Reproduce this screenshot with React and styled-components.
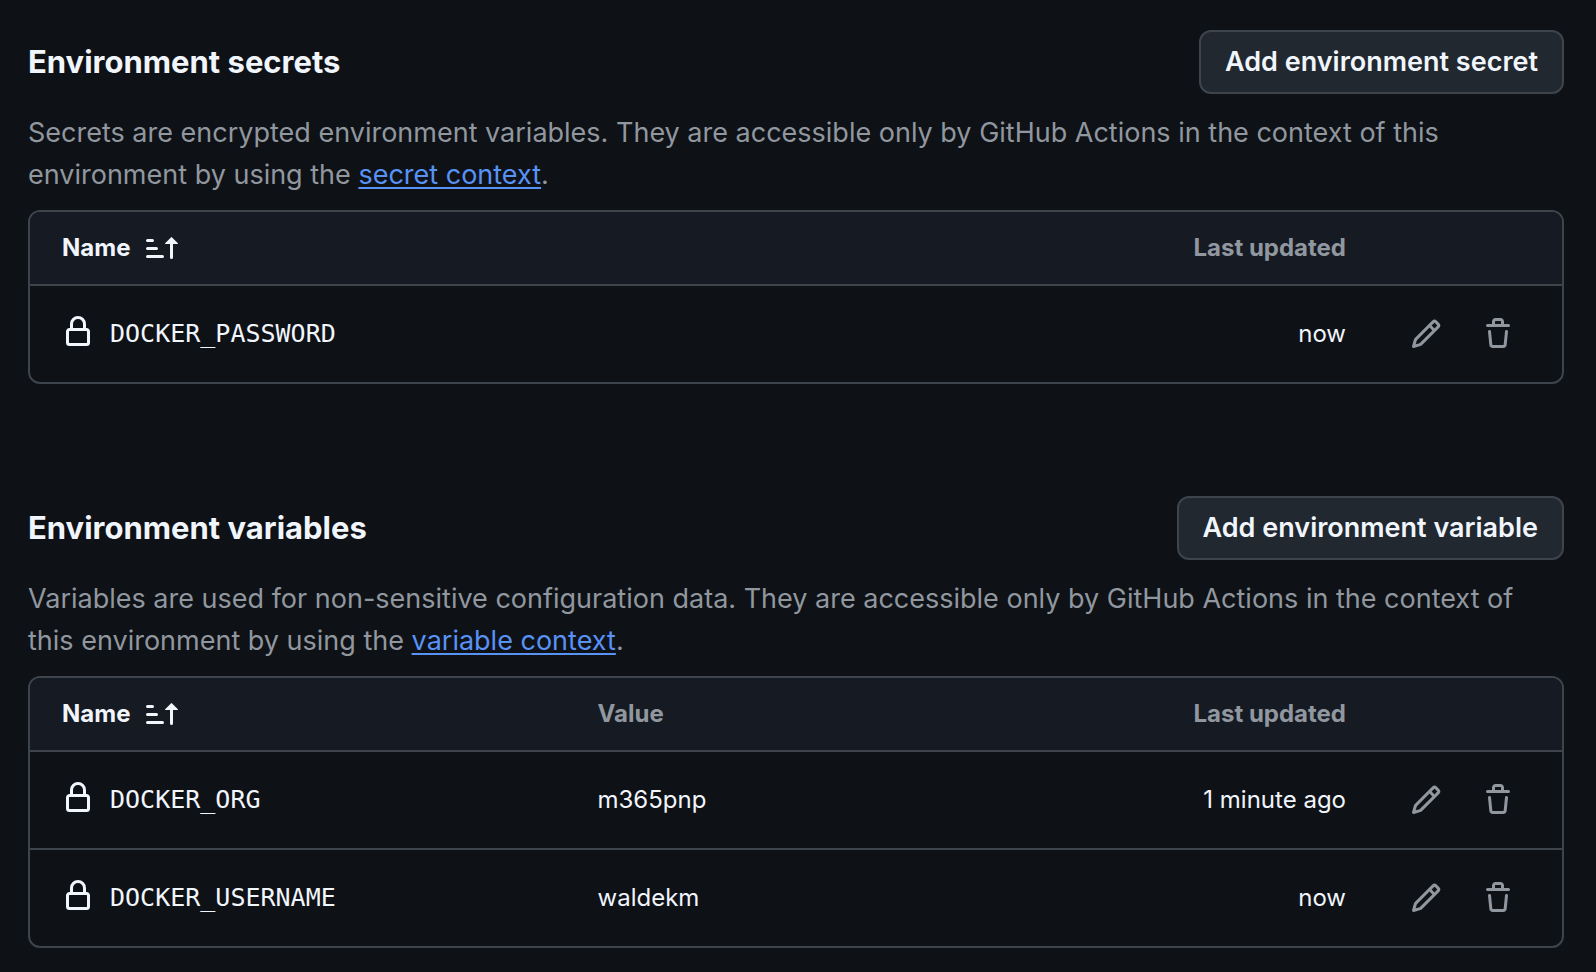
import React from 'react';
import styled, { createGlobalStyle, ThemeProvider } from 'styled-components';

const theme = {
  canvas: '#0e1116',
  header: '#161a23',
  control: '#222830',
  border: '#3e444c',
  text: '#f1f5fc',
  muted: '#91979f',
  link: '#5892f5',
  sans: 'Inter, "Liberation Sans", sans-serif',
  mono: '"DejaVu Sans Mono", "Liberation Mono", monospace',
};

const GlobalStyle = createGlobalStyle`
  *, *::before, *::after { box-sizing: border-box; }
  body {
    margin: 0;
    background: ${theme.canvas};
    color: ${theme.text};
    font-family: ${theme.sans};
  }
`;

const Page = styled.main`
  display: flex;
  flex-direction: column;
  gap: 112px;
  padding: 30px 32px 24px 28px;
`;

const Section = styled.section`
  display: flex;
  flex-direction: column;
`;

const SectionHeader = styled.header`
  display: flex;
  align-items: center;
  justify-content: space-between;
  gap: 16px;
  margin-bottom: 18px;
`;

const Title = styled.h2`
  margin: 0;
  font-size: 31px;
  line-height: 48px;
  font-weight: 700;
`;

const AddButton = styled.button`
  height: 64px;
  padding: 0 24px;
  border: 2px solid ${({ theme }) => theme.border};
  border-radius: 12px;
  background: ${({ theme }) => theme.control};
  color: ${({ theme }) => theme.text};
  font-family: inherit;
  font-size: 27px;
  font-weight: 600;
  line-height: 40px;
  white-space: nowrap;
  cursor: pointer;
`;

const Description = styled.p`
  margin: 0 0 14px;
  color: ${({ theme }) => theme.muted};
  font-size: 27px;
  line-height: 42px;
`;

const ContextLink = styled.a`
  color: ${({ theme }) => theme.link};
  text-decoration: underline;
  text-decoration-thickness: 2px;
  text-underline-offset: 3px;
`;

const TableFrame = styled.div`
  border: 2px solid ${({ theme }) => theme.border};
  border-radius: 12px;
  overflow: hidden;
`;

const Table = styled.table`
  width: 100%;
  table-layout: fixed;
  border-collapse: separate;
  border-spacing: 0;
  font-size: 24px;
  line-height: 36px;
`;

const HeadCell = styled.th`
  width: ${({ $width }) => $width || 'auto'};
  height: 72px;
  padding: 0 16px;
  background: ${({ theme }) => theme.header};
  color: ${({ theme }) => theme.muted};
  font-weight: 700;
  text-align: ${({ $align }) => $align || 'left'};

  &:first-child { padding-left: 32px; }
`;

const Cell = styled.td`
  height: 98px;
  padding: 0 16px;
  border-top: 2px solid ${({ theme }) => theme.border};
  text-align: ${({ $align }) => $align || 'left'};

  &:first-child { padding-left: 32px; }
  &:last-child { padding-right: 32px; }
`;

const SortButton = styled.button`
  display: flex;
  align-items: center;
  gap: 16px;
  padding: 0;
  border: 0;
  background: none;
  color: ${({ theme }) => theme.text};
  font: inherit;
  cursor: pointer;
`;

const NameGroup = styled.div`
  display: flex;
  align-items: center;
  gap: 16px;
`;

const LockSlot = styled.span`
  display: flex;
  padding-bottom: 4px;
`;

const EntryName = styled.code`
  font-family: ${({ theme }) => theme.mono};
  font-size: 25px;
`;

const Actions = styled.div`
  display: flex;
  justify-content: flex-end;
  gap: 8px;
`;

const IconButton = styled.button`
  display: flex;
  align-items: center;
  justify-content: center;
  width: 64px;
  height: 64px;
  padding: 0;
  border: 0;
  border-radius: 12px;
  background: none;
  color: ${({ theme }) => theme.muted};
  cursor: pointer;
`;

const Glyph = styled.svg`
  display: block;
  flex: none;
  width: 32px;
  height: 32px;
  fill: currentColor;
`;

const icons = {
  sort: 'm12.927 2.573 3 3A.25.25 0 0 1 15.75 6H13.5v6.75a.75.75 0 0 1-1.5 0V6H9.75a.25.25 0 0 1-.177-.427l3-3a.25.25 0 0 1 .354 0ZM0 12.25a.75.75 0 0 1 .75-.75h7.5a.75.75 0 0 1 0 1.5H.75a.75.75 0 0 1-.75-.75Zm0-4a.75.75 0 0 1 .75-.75h4.5a.75.75 0 0 1 0 1.5H.75a.75.75 0 0 1-.75-.75Zm0-4a.75.75 0 0 1 .75-.75h2.5a.75.75 0 0 1 0 1.5H.75A.75.75 0 0 1 0 4.25Z',
  lock: 'M4 4a4 4 0 0 1 8 0v2h.25c.966 0 1.75.784 1.75 1.75v5.5A1.75 1.75 0 0 1 12.25 15h-8.5A1.75 1.75 0 0 1 2 13.25v-5.5C2 6.784 2.784 6 3.75 6H4Zm8.25 3.5h-8.5a.25.25 0 0 0-.25.25v5.5c0 .138.112.25.25.25h8.5a.25.25 0 0 0 .25-.25v-5.5a.25.25 0 0 0-.25-.25ZM10.5 6V4a2.5 2.5 0 1 0-5 0v2Z',
  pencil: 'M11.013 1.427a1.75 1.75 0 0 1 2.474 0l1.086 1.086a1.75 1.75 0 0 1 0 2.474l-8.61 8.61c-.21.21-.47.364-.756.445l-3.251.93a.75.75 0 0 1-.927-.928l.929-3.25c.081-.286.235-.547.445-.758l8.61-8.61Zm.176 4.823L9.75 4.81l-6.286 6.287a.253.253 0 0 0-.064.108l-.558 1.953 1.953-.558a.253.253 0 0 0 .108-.064Zm1.238-3.763a.25.25 0 0 0-.354 0L10.811 3.75l1.439 1.44 1.263-1.263a.25.25 0 0 0 0-.354Z',
  trash: 'M11 1.75V3h2.25a.75.75 0 0 1 0 1.5H2.75a.75.75 0 0 1 0-1.5H5V1.75C5 .784 5.784 0 6.75 0h2.5C10.216 0 11 .784 11 1.75ZM4.496 6.675l.66 6.6a.25.25 0 0 0 .249.225h5.19a.25.25 0 0 0 .249-.225l.66-6.6a.75.75 0 0 1 1.492.149l-.66 6.6A1.748 1.748 0 0 1 10.595 15h-5.19a1.75 1.75 0 0 1-1.741-1.575l-.66-6.6a.75.75 0 1 1 1.492-.15ZM6.5 1.75V3h3V1.75a.25.25 0 0 0-.25-.25h-2.5a.25.25 0 0 0-.25.25Z',
};

function Icon({ name }) {
  return (
    <Glyph viewBox="0 0 16 16" aria-hidden="true">
      <path d={icons[name]} />
    </Glyph>
  );
}

function EntriesTable({ label, rows, showValue }) {
  return (
    <TableFrame>
      <Table aria-label={label}>
        <thead>
          <tr>
            <HeadCell scope="col" $width="36%" aria-sort="ascending">
              <SortButton type="button">
                Name
                <Icon name="sort" />
              </SortButton>
            </HeadCell>
            {showValue && <HeadCell scope="col">Value</HeadCell>}
            <HeadCell scope="col" $align="right">Last updated</HeadCell>
            <HeadCell scope="col" $width="200px" aria-label="Actions" />
          </tr>
        </thead>
        <tbody>
          {rows.map((row) => (
            <tr key={row.name}>
              <Cell>
                <NameGroup>
                  <LockSlot><Icon name="lock" /></LockSlot>
                  <EntryName>{row.name}</EntryName>
                </NameGroup>
              </Cell>
              {showValue && <Cell>{row.value}</Cell>}
              <Cell $align="right">{row.updated}</Cell>
              <Cell>
                <Actions>
                  <IconButton type="button" aria-label={`Edit ${row.name}`}>
                    <Icon name="pencil" />
                  </IconButton>
                  <IconButton type="button" aria-label={`Delete ${row.name}`}>
                    <Icon name="trash" />
                  </IconButton>
                </Actions>
              </Cell>
            </tr>
          ))}
        </tbody>
      </Table>
    </TableFrame>
  );
}

const secrets = [{ name: 'DOCKER_PASSWORD', updated: 'now' }];

const variables = [
  { name: 'DOCKER_ORG', value: 'm365pnp', updated: '1 minute ago' },
  { name: 'DOCKER_USERNAME', value: 'waldekm', updated: 'now' },
];

export default function App() {
  return (
    <ThemeProvider theme={theme}>
      <GlobalStyle />
      <Page>
        <Section>
          <SectionHeader>
            <Title>Environment secrets</Title>
            <AddButton type="button">Add environment secret</AddButton>
          </SectionHeader>
          <Description>
            Secrets are encrypted environment variables. They are accessible only by GitHub
            Actions in the context of this environment by using the{' '}
            <ContextLink href="#secret-context">secret context</ContextLink>.
          </Description>
          <EntriesTable label="Environment secrets" rows={secrets} />
        </Section>
        <Section>
          <SectionHeader>
            <Title>Environment variables</Title>
            <AddButton type="button">Add environment variable</AddButton>
          </SectionHeader>
          <Description>
            Variables are used for non-sensitive configuration data. They are accessible only
            by GitHub Actions in the context of this environment by using the{' '}
            <ContextLink href="#variable-context">variable context</ContextLink>.
          </Description>
          <EntriesTable label="Environment variables" rows={variables} showValue />
        </Section>
      </Page>
    </ThemeProvider>
  );
}
